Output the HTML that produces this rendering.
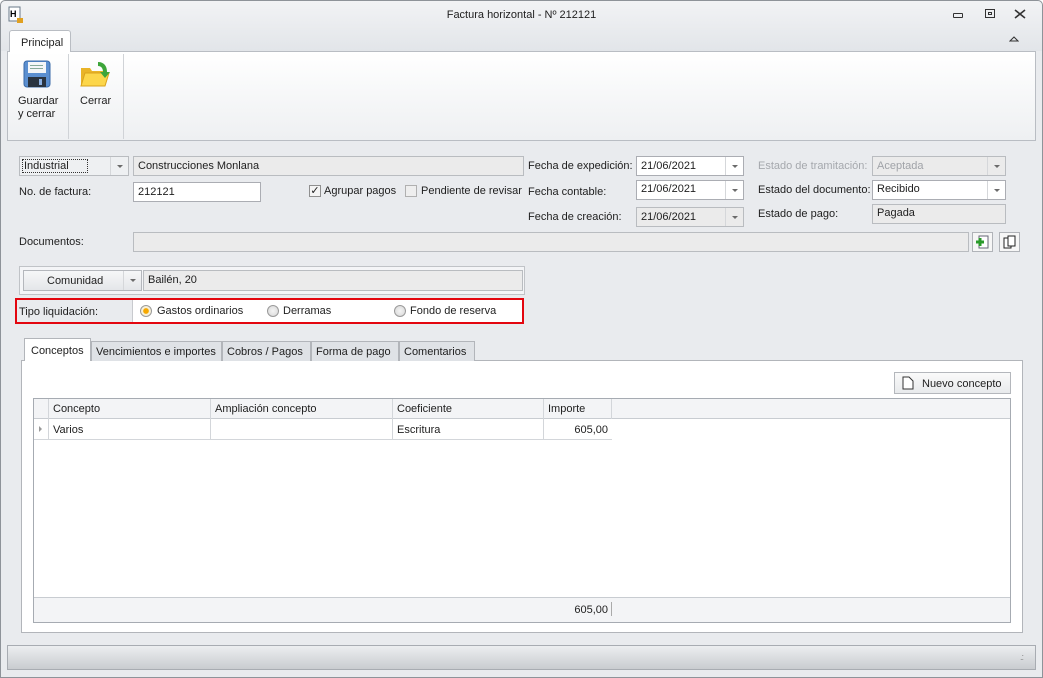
<!DOCTYPE html>
<html><head><meta charset="utf-8"><style>
*{box-sizing:border-box;margin:0;padding:0}
body{width:1043px;height:678px;overflow:hidden;font-family:"Liberation Sans",sans-serif;font-size:11px;color:#1e1e1e;background:#fff;position:relative}
.a{position:absolute}
.lbl{position:absolute;font-size:11px;white-space:nowrap}
.inp{position:absolute;background:#fff;border:1px solid #abadb3;height:20px;padding:3px 0 0 4px;font-size:11px;white-space:nowrap}
.dis{background:#ebebeb;border-color:#b9bcc0}
.dd{position:absolute;right:0;top:0;width:18px;height:18px;border-left:1px solid #d5d7da}
.dd:after{content:"";position:absolute;left:6px;top:8px;border-left:3px solid transparent;border-right:3px solid transparent;border-top:3px solid #6b6b6b}
.tab{position:absolute;top:341px;height:20px;border:1px solid #b2b5ba;border-bottom:none;background:#dfe2e6;padding:4px 4px 0;font-size:11px;white-space:nowrap}
.col{position:absolute;top:0;height:41px;border-left:1px solid #d3d6da}
.rad{position:absolute;width:12px;height:12px;border-radius:50%;border:1px solid #9a9a9a;background:radial-gradient(#f4f4f4,#d6d6d6)}
</style></head><body>
<div class="a" style="left:0;top:0;width:1043px;height:678px;border:1px solid #8e9399;border-radius:5px 5px 0 0;background:#e9ebee"></div>
<div class="a" style="left:1px;top:1px;width:1041px;height:50px;background:linear-gradient(#f2f3f5,#e2e5e9);border-radius:5px 5px 0 0"></div>
<svg class="a" style="left:8px;top:6px" width="16" height="18"><rect x="1" y="1" width="11" height="14" fill="#fff" stroke="#6a7a8a"/><text x="2" y="11" font-size="9" font-weight="bold" font-family="Liberation Sans">H</text><rect x="9" y="12" width="6" height="5" fill="#e0a020"/></svg>
<div class="lbl" style="left:0;width:1043px;text-align:center;top:9px">Factura horizontal - Nº 212121</div>
<div class="a" style="left:953px;top:13px;width:10px;height:5px;border:1px solid #333;border-radius:1px"></div>
<div class="a" style="left:985px;top:9px;width:10px;height:9px;border:1px solid #333"><div class="a" style="left:2px;top:2px;width:4px;height:3px;border:1px solid #333"></div></div>
<svg class="a" style="left:1014px;top:9px" width="12" height="10"><path d="M1 1l10 8M11 1l-10 8" stroke="#333" stroke-width="1.6" fill="none"/></svg>
<svg class="a" style="left:1009px;top:36px" width="10" height="6"><path d="M1 5l4-4 4 4z" fill="none" stroke="#333"/></svg>
<div class="a" style="left:9px;top:30px;width:62px;height:23px;background:#fff;border:1px solid #b9bdc3;border-bottom:none;border-radius:3px 3px 0 0;padding:6px 0 0 11px">Principal</div>
<div class="a" style="left:7px;top:51px;width:1029px;height:90px;border:1px solid #b9bdc3;background:linear-gradient(#fff,#eef0f2)"></div>
<div class="a" style="left:10px;top:51px;width:60px;height:1px;background:#fff"></div>
<div class="a" style="left:68px;top:54px;width:1px;height:85px;background:#d0d3d7"></div>
<div class="a" style="left:123px;top:54px;width:1px;height:85px;background:#d0d3d7"></div>
<svg class="a" style="left:23px;top:60px" width="28" height="28"><rect x="1" y="1" width="26" height="26" rx="3" fill="#5b8fd0" stroke="#3a6aa8"/><rect x="5" y="2" width="18" height="11" fill="#f4f6f8"/><rect x="7" y="5" width="13" height="1" fill="#8a9"/><rect x="7" y="8" width="13" height="1" fill="#8a9"/><rect x="5" y="17" width="18" height="10" fill="#2a3440"/><rect x="16" y="19" width="3" height="6" fill="#8cb0e0"/></svg>
<div class="lbl" style="left:18px;top:95px;line-height:13px">Guardar<br>y cerrar</div>
<svg class="a" style="left:79px;top:58px" width="32" height="32"><path d="M2 10h9l2 3h13v15H2z" fill="#e9b428"/><path d="M2 28l4-13h24l-4 13z" fill="#fcd64a" stroke="#d9a21c"/><path d="M19 4c6 0 9 4 9 10l3 0-5 6-5-6h3c0-4-2-6-5-6z" fill="#3da53a"/></svg>
<div class="lbl" style="left:80px;top:95px">Cerrar</div>

<div class="inp" style="left:19px;top:156px;width:110px;background:#eef0f2;border-color:#b9bcc0;padding-left:3px"><span style="outline:1px dotted #333;padding:0 18px 0 1px">Industrial</span><div class="dd"></div></div>
<div class="inp dis" style="left:133px;top:156px;width:391px">Construcciones Monlana</div>
<div class="lbl" style="left:19px;top:186px">No. de factura:</div>
<div class="inp" style="left:133px;top:182px;width:128px">212121</div>
<div class="a" style="left:309px;top:185px;width:12px;height:12px;border:1px solid #8f8f8f;background:#f4f4f4;font-size:11px;line-height:10px;text-align:center">✓</div>
<div class="lbl" style="left:324px;top:185px">Agrupar pagos</div>
<div class="a" style="left:405px;top:185px;width:12px;height:12px;border:1px solid #b0b0b0;background:#eee"></div>
<div class="lbl" style="left:421px;top:185px">Pendiente de revisar</div>
<div class="lbl" style="left:528px;top:160px">Fecha de expedición:</div>
<div class="lbl" style="left:528px;top:186px">Fecha contable:</div>
<div class="lbl" style="left:528px;top:211px">Fecha de creación:</div>
<div class="inp" style="left:636px;top:156px;width:108px">21/06/2021<div class="dd"></div></div>
<div class="inp" style="left:636px;top:180px;width:108px;padding-top:2px">21/06/2021<div class="dd"></div></div>
<div class="inp dis" style="left:636px;top:207px;width:108px">21/06/2021<div class="dd"></div></div>
<div class="lbl" style="left:758px;top:160px;color:#a5a8ad">Estado de tramitación:</div>
<div class="lbl" style="left:758px;top:184px">Estado del documento:</div>
<div class="lbl" style="left:758px;top:208px">Estado de pago:</div>
<div class="inp dis" style="left:872px;top:156px;width:134px;color:#a0a3a8">Aceptada<div class="dd"></div></div>
<div class="inp" style="left:872px;top:180px;width:134px;padding-top:2px">Recibido<div class="dd"></div></div>
<div class="inp dis" style="left:872px;top:204px;width:134px;padding-top:2px">Pagada</div>
<div class="lbl" style="left:19px;top:236px">Documentos:</div>
<div class="inp dis" style="left:133px;top:232px;width:836px"></div>
<div class="a" style="left:972px;top:232px;width:21px;height:20px;border:1px solid #b0b3b8;background:#f6f6f6"><svg width="19" height="18"><rect x="6" y="3" width="9" height="12" fill="#fff" stroke="#667"/><path d="M3 9h8M7 5v8" stroke="#2a9a2a" stroke-width="3"/></svg></div>
<div class="a" style="left:999px;top:232px;width:21px;height:20px;border:1px solid #b0b3b8;background:#f6f6f6"><svg width="19" height="18"><rect x="4" y="5" width="7" height="10" fill="#fff" stroke="#222"/><rect x="8" y="3" width="7" height="10" fill="#fff" stroke="#222"/></svg></div>

<div class="a" style="left:19px;top:266px;width:506px;height:29px;border:1px solid #c0c3c7;background:#f4f5f7"></div>
<div class="a" style="left:23px;top:270px;width:119px;height:21px;border:1px solid #b4b7bc;background:linear-gradient(#f6f7f8,#e4e6e9);padding:4px 0 0 23px">Comunidad<div class="dd" style="height:19px"></div></div>
<div class="inp dis" style="left:143px;top:270px;width:380px;height:21px">Bailén, 20</div>
<div class="a" style="left:15px;top:298px;width:509px;height:26px;border:2px solid #e3060f;background:#fff"><div class="a" style="left:0;top:0;width:116px;height:22px;background:#e9ebee;border-right:1px solid #c8cace"></div></div>
<div class="lbl" style="left:19px;top:306px">Tipo liquidación:</div>
<div class="rad" style="left:140px;top:305px;background:radial-gradient(#f6a800 35%,#f7f0d8 45%)"></div>
<div class="lbl" style="left:157px;top:305px">Gastos ordinarios</div>
<div class="rad" style="left:267px;top:305px"></div>
<div class="lbl" style="left:283px;top:305px">Derramas</div>
<div class="rad" style="left:394px;top:305px"></div>
<div class="lbl" style="left:410px;top:305px">Fondo de reserva</div>

<div class="a" style="left:21px;top:360px;width:1002px;height:273px;background:#fff;border:1px solid #b2b5ba"></div>
<div class="tab" style="left:24px;top:338px;height:23px;background:#fff;padding-top:6px;padding-left:6px;width:67px">Conceptos</div>
<div class="tab" style="left:91px;width:131px">Vencimientos e importes</div>
<div class="tab" style="left:222px;width:89px">Cobros / Pagos</div>
<div class="tab" style="left:311px;width:88px">Forma de pago</div>
<div class="tab" style="left:399px;width:76px">Comentarios</div>
<div class="a" style="left:894px;top:372px;width:117px;height:22px;border:1px solid #b4b7bc;background:linear-gradient(#fafafa,#e8eaec);padding:5px 0 0 27px">Nuevo concepto</div>
<svg class="a" style="left:902px;top:376px" width="12" height="14"><path d="M1 1h6l4 4v8H1z" fill="#fff" stroke="#333"/></svg>
<div class="a" style="left:33px;top:398px;width:978px;height:225px;border:1px solid #a6abb2;background:#fff">
 <div class="a" style="left:0;top:0;width:976px;height:20px;background:#f3f4f6;border-bottom:1px solid #c8ccd1"></div>
 <div class="a" style="left:0;top:20px;width:578px;height:21px;border-bottom:1px solid #d3d6da"></div>
 <div class="col" style="left:14px"></div><div class="col" style="left:176px"></div><div class="col" style="left:358px"></div><div class="col" style="left:509px"></div><div class="col" style="left:577px;height:20px"></div>
 <div class="lbl" style="left:19px;top:4px">Concepto</div><div class="lbl" style="left:181px;top:4px">Ampliación concepto</div><div class="lbl" style="left:363px;top:4px">Coeficiente</div><div class="lbl" style="left:514px;top:4px">Importe</div>
 <div class="a" style="left:5px;top:27px;border-top:3px solid transparent;border-bottom:3px solid transparent;border-left:3px solid #999"></div>
 <div class="lbl" style="left:19px;top:25px">Varios</div><div class="lbl" style="left:363px;top:25px">Escritura</div><div class="lbl" style="left:509px;width:65px;text-align:right;top:25px">605,00</div>
 <div class="a" style="left:0;top:198px;width:976px;height:25px;background:#f3f4f6;border-top:1px solid #c8ccd1"></div>
 <div class="lbl" style="left:509px;width:65px;text-align:right;top:205px">605,00</div>
 <div class="a" style="left:577px;top:203px;width:1px;height:14px;background:#aaa"></div>
</div>
<div class="a" style="left:7px;top:645px;width:1029px;height:25px;border:1px solid #a8acb2;background:linear-gradient(#eceef0,#c9ccd0)"></div>
<div class="lbl" style="left:1020px;top:652px;font-size:9px;color:#888;letter-spacing:-1px">.:</div>
</body></html>
